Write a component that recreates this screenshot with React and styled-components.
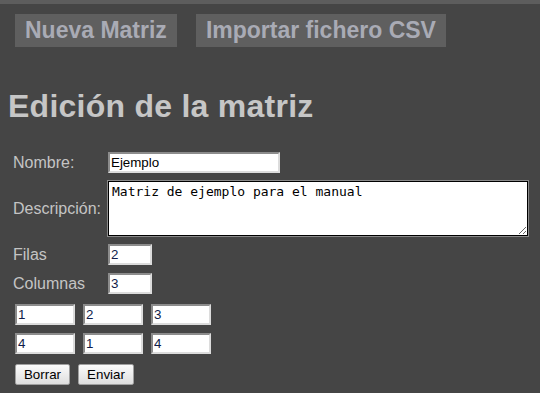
import styled, { createGlobalStyle } from "styled-components";

const GlobalStyle = createGlobalStyle`
  html, body {
    margin: 0;
    padding: 0;
    background: #454545;
  }
  body {
    font-family: "Liberation Sans", Arial, sans-serif;
  }
`;

const Page = styled.div`
  min-height: 393px;
  background: #454545;
`;

const TopStrip = styled.div`
  height: 4px;
  background: #5d5d5d;
`;

const Nav = styled.nav`
  display: flex;
  gap: 19px;
  padding: 10px 15px 0;
`;

const NavButton = styled.a`
  background: #5f5f5f;
  color: #a9abb5;
  font-size: 23px;
  font-weight: bold;
  line-height: 27px;
  padding: 3px 10px;
  text-decoration: none;
`;

const Title = styled.h1`
  color: #c6c6c6;
  font-size: 32px;
  font-weight: bold;
  letter-spacing: 0.25px;
  line-height: 36px;
  margin: 41px 0 0 8px;
`;

const Form = styled.form`
  margin-top: 28px;
  padding-left: 13px;
`;

const Fields = styled.div`
  display: grid;
  grid-template-columns: 95px auto;
  row-gap: 8px;
  align-items: center;
  justify-items: start;
`;

const Label = styled.label`
  color: #c4c4c4;
  font-size: 16px;
`;

const Input = styled.input`
  box-sizing: border-box;
  width: ${props => props.$width}px;
  height: 21px;
  margin: 0;
  padding: 1px 1px;
  background: #fff;
  color: ${props => (props.$numeric ? "#101c4a" : "#000")};
  font-family: "Liberation Sans", Arial, sans-serif;
  font-size: 13.33px;
  border: 2px solid;
  border-color: #8c8c8c #dcdcdc #dcdcdc #8c8c8c;
  outline: none;
`;

const TextArea = styled.textarea`
  box-sizing: border-box;
  width: 420px;
  height: 55px;
  margin: 0;
  padding: 2px 3px;
  background: #fff;
  color: #000;
  font-family: "DejaVu Sans Mono", monospace;
  font-size: 13px;
  line-height: 15px;
  border: 1px solid #000;
  box-shadow: 0 0 0 1px #8a8a8a;
  outline: none;
`;

const Matrix = styled.div`
  display: grid;
  grid-template-columns: repeat(3, 60px);
  gap: 8px;
  margin-top: 10px;
  padding-left: 2px;
`;

const Actions = styled.div`
  display: flex;
  gap: 8px;
  margin-top: 10px;
  padding-left: 2px;
`;

const Button = styled.button`
  box-sizing: border-box;
  height: 21px;
  width: ${props => props.$width}px;
  padding: 0;
  font-family: "Liberation Sans", Arial, sans-serif;
  font-size: 13.33px;
  color: #000;
  background: linear-gradient(#fbfbfb, #dedede);
  border: 1px solid #a0a0a0;
  border-radius: 2px;
`;

const matrix = [
  ["1", "2", "3"],
  ["4", "1", "4"],
];

export default function App() {
  return (
    <Page>
      <GlobalStyle />
      <TopStrip />
      <Nav>
        <NavButton href="#">Nueva Matriz</NavButton>
        <NavButton href="#">Importar fichero CSV</NavButton>
      </Nav>
      <Title>Edición de la matriz</Title>
      <Form onSubmit={e => e.preventDefault()}>
        <Fields>
          <Label>Nombre:</Label>
          <Input $width={172} defaultValue="Ejemplo" />
          <Label>Descripción:</Label>
          <TextArea defaultValue="Matriz de ejemplo para el manual" />
          <Label>Filas</Label>
          <Input $width={44} $numeric defaultValue="2" />
          <Label>Columnas</Label>
          <Input $width={44} $numeric defaultValue="3" />
        </Fields>
        <Matrix>
          {matrix.flat().map((v, i) => (
            <Input key={i} $width={60} $numeric defaultValue={v} />
          ))}
        </Matrix>
        <Actions>
          <Button type="reset" $width={55}>Borrar</Button>
          <Button type="submit" $width={56}>Enviar</Button>
        </Actions>
      </Form>
    </Page>
  );
}
